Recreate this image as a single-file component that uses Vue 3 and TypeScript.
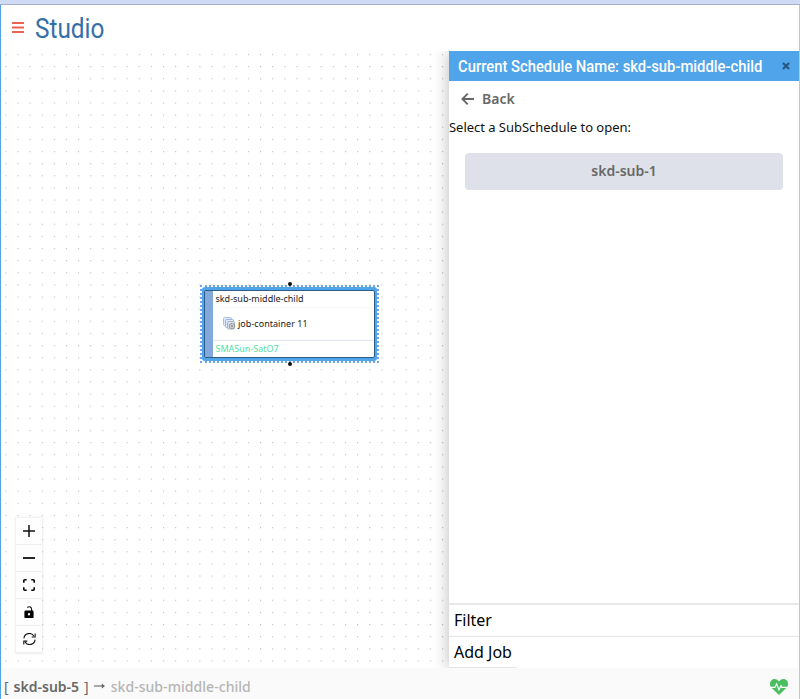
<script setup lang="ts">
import { ref } from 'vue'

const scheduleName = ref('skd-sub-middle-child')
const subSchedules = ref<string[]>(['skd-sub-1'])
const sections: string[] = ['Filter', 'Add Job']
</script>

<template>
  <div class="window">
    <header class="topbar">
      <svg class="menu" viewBox="0 0 12 11" width="12" height="11">
        <path d="M0 1h12M0 5.5h12M0 10h12" stroke="#ee6350" stroke-width="2" />
      </svg>
      <h1>Studio</h1>
    </header>

    <main class="workspace">
      <section class="canvas">
        <svg class="dots" width="448" height="617">
          <defs>
            <pattern id="grid" x="4.3" y="2.9" width="12.13" height="12.13" patternUnits="userSpaceOnUse">
              <circle cx="0.6" cy="0.6" r="0.6" fill="#b0b0b0" />
            </pattern>
          </defs>
          <rect width="448" height="617" fill="url(#grid)" />
        </svg>

        <div class="node">
          <i class="port top"></i>
          <i class="port bottom"></i>
          <div class="frame">
            <div class="card">
              <div class="stripe"></div>
              <div class="rows">
                <div class="name"><span>{{ scheduleName }}</span></div>
                <div class="job">
                  <svg width="13" height="13" viewBox="0 0 13 13">
                    <rect x=".5" y=".5" width="8" height="8" rx="1" fill="#dfe9fa" stroke="#a9c0e8" />
                    <rect x="2.5" y="2.5" width="8" height="8" rx="1" fill="#dfe9fa" stroke="#98b4e2" />
                    <rect x="4.5" y="4.5" width="7" height="7.5" rx="1" fill="#dce2ea" stroke="#a4b3c9" />
                    <circle cx="9" cy="9" r="2.6" fill="#d5d5d5" stroke="#959595" stroke-width="1.2" stroke-dasharray="1.5 .6" />
                    <circle cx="9" cy="9" r=".9" fill="#888" />
                  </svg>
                  <span>job-container 11</span>
                </div>
                <div class="calendar"><span>SMASun-SatO7</span></div>
              </div>
            </div>
          </div>
        </div>

        <div class="controls">
          <button aria-label="Zoom in">
            <svg viewBox="0 0 12 12" width="12" height="12"><path d="M6 0v12M0 6h12" stroke="#111" stroke-width="1.5" /></svg>
          </button>
          <button aria-label="Zoom out">
            <svg viewBox="0 0 12 12" width="12" height="12"><path d="M0 6h12" stroke="#000" stroke-width="1.7" /></svg>
          </button>
          <button aria-label="Fit view">
            <svg viewBox="0 0 12 12" width="12" height="12" fill="none" stroke="#000" stroke-width="1.6">
              <path d="M.8 3.7V1.8a1 1 0 0 1 1-1h1.9M8.3.8h1.9a1 1 0 0 1 1 1v1.9M11.2 8.3v1.9a1 1 0 0 1-1 1H8.3M3.7 11.2H1.8a1 1 0 0 1-1-1V8.3" />
            </svg>
          </button>
          <button aria-label="Toggle interactivity">
            <svg viewBox="0 0 12 13" width="12" height="13">
              <path d="M4.3 1.5C6.4-.2 8.6 1.2 8.6 3.2v2" fill="none" stroke="#111" stroke-width="1.1" />
              <path fill-rule="evenodd" d="M2.6 4.5h6.8a1.2 1.2 0 0 1 1.2 1.2v5.2a1.2 1.2 0 0 1-1.2 1.2H2.6a1.2 1.2 0 0 1-1.2-1.2V5.700a1.2 1.2 0 0 1 1.2-1.2zM6 7.1a1.2 1.2 0 1 0 0 2.4 1.2 1.2 0 0 0 0-2.4z" />
            </svg>
          </button>
          <button aria-label="Refresh">
            <svg viewBox="0 0 13 12" width="13" height="12" fill="none" stroke="#111" stroke-width="1.05">
              <path d="M.9 5.4A5.4 5.4 0 0 1 10.9 3.1M12.2.4v3.5H8.7M12.1 6.6A5.4 5.4 0 0 1 2.1 8.9M.8 11.6V8.1h3.5" />
            </svg>
          </button>
        </div>
      </section>

      <aside class="panel">
        <div class="panel-head">
          <span class="panel-title">Current Schedule Name: {{ scheduleName }}</span>
          <svg class="close" viewBox="0 0 8 8" width="8" height="8"><path d="M.9.9l6.2 6.2M7.1.9L.9 7.1" stroke="#28567e" stroke-width="2.1" /></svg>
        </div>
        <div class="back">
          <svg viewBox="0 0 13 12" width="13" height="12" fill="none" stroke="#686868" stroke-width="1.9">
            <path d="M13 6H1.4M6.7.7L1.4 6l5.3 5.3" />
          </svg>
          <span>Back</span>
        </div>
        <p class="prompt">Select a SubSchedule to open:</p>
        <button v-for="item in subSchedules" :key="item" class="sub">{{ item }}</button>
        <div class="spacer"></div>
        <div v-for="section in sections" :key="section" class="section">{{ section }}</div>
        <div class="tail"></div>
      </aside>
    </main>

    <footer class="status">
      <span class="bracket">[</span>
      <b>skd-sub-5</b>
      <span class="bracket close-bracket">]</span>
      <svg class="arrow" viewBox="0 0 11 6" width="11" height="6"><path d="M0 3h9" stroke="#666" stroke-width="1.1" /><path d="M7.8.6L11 3 7.800 5.4z" fill="#666" /></svg>
      <span class="current">{{ scheduleName }}</span>
      <svg class="health" viewBox="0 0 18 16" width="18" height="16">
        <path fill="#4bbf60" d="M9 16L1.2 8.4C-1 5.800-.1 1.700 2.500.5 5-.6 7.600.4 9 2.500 10.400.4 13-.6 15.500.5c2.600 1.200 3.500 5.300 1.300 7.900z" />
        <path fill="none" stroke="#fff" stroke-width="1.2" d="M0 8.300h4.900l1.700-3.400 2.300 5.900 2.100-4.100.9 1.600H18" />
      </svg>
    </footer>
  </div>
</template>

<style>
body {
  background: #fff;
}
</style>

<style scoped>
* {
  box-sizing: border-box;
}

.window {
  display: flex;
  flex-direction: column;
  width: 800px;
  height: 699px;
  overflow: hidden;
  background:
    linear-gradient(#a7adcb, #a7adcb) 0 4px / 100% 1px no-repeat,
    linear-gradient(#cfdbf5, #cfdbf5) 0 0 / 100% 4px no-repeat,
    linear-gradient(#50a5ea, #50a5ea) 0 5px / 1px 100% no-repeat,
    linear-gradient(#c6c6c6, #c6c6c6) 100% 5px / 1px 100% no-repeat,
    #fff;
  padding: 5px 1px 0;
  font-family: "Noto Sans", "Open Sans", sans-serif;
  color: #111;
}

.topbar {
  display: flex;
  align-items: center;
  gap: 11px;
  height: 46px;
  padding-left: 11px;
}

.menu {
  display: block;
  margin-bottom: 1px;
}

h1 {
  margin: 0;
  padding-top: 2px;
  font: 400 28px/46px Roboto, sans-serif;
  color: #356fa8;
  transform: scaleX(0.87);
  transform-origin: left;
}

.workspace {
  display: flex;
  height: 617px;
}

.canvas {
  position: relative;
  width: 448px;
}

.dots {
  display: block;
}

.node {
  position: absolute;
  left: 199px;
  top: 234px;
  width: 179px;
  height: 78px;
  border: 2px dotted #72a3e5;
}

.frame {
  width: 175px;
  height: 74px;
  padding: 3px 2px 3px 2px;
  background: #50a5ea;
  border-radius: 3px;
}

.card {
  display: flex;
  height: 68px;
  border: 1px solid #2f5c87;
  border-radius: 2px;
  background: #fff;
}

.stripe {
  width: 8px;
  background: #83a8dc;
}

.rows {
  flex: 1;
  font-size: 9px;
  line-height: 15px;
  color: #222;
}

.rows span {
  white-space: nowrap;
}

.name,
.calendar {
  height: 17px;
  padding-left: 2.5px;
}

.name {
  border-bottom: 1px solid #f8f8fb;
}

.job {
  display: flex;
  align-items: center;
  gap: 2px;
  height: 33px;
  padding-left: 10px;
  border-bottom: 1px solid #e2e6ef;
}

.job span {
  padding-bottom: 2px;
  letter-spacing: 0.03px;
}

.job svg {
  margin-bottom: 1px;
}

.calendar {
  color: #54dfa0;
}

.port {
  position: absolute;
  left: 86px;
  width: 4px;
  height: 4px;
  border-radius: 50%;
  background: #111;
}

.port.top {
  top: -5px;
}

.port.bottom {
  bottom: -5px;
}

.controls {
  position: absolute;
  left: 15px;
  top: 467px;
  width: 26px;
  box-shadow: 0 0 2px 1px rgba(0, 0, 0, 0.08);
}

.controls button {
  display: flex;
  align-items: center;
  justify-content: center;
  width: 26px;
  height: 27px;
  padding: 0;
  border: 0;
  border-bottom: 1px solid #eee;
  background: #fefefe;
}

.panel {
  display: flex;
  position: relative;
  flex-direction: column;
  width: 350px;
  background: #fff;
  box-shadow: 0 0 16px rgba(0, 0, 0, 0.28);
  clip-path: inset(0 0 0 -24px);
}

.panel-head {
  display: flex;
  align-items: center;
  justify-content: space-between;
  height: 30px;
  padding: 0 9px;
  background: #50a5ea;
}

.panel-title {
  width: 312px;
  padding-top: 2px;
  font: 500 16px/30px Roboto, sans-serif;
  color: #fff;
  white-space: nowrap;
  transform: scaleX(0.925);
  transform-origin: left;
}

.close {
  flex: none;
}

.back {
  display: flex;
  align-items: center;
  gap: 8px;
  height: 36px;
  padding-left: 12px;
  font-size: 14px;
  font-weight: 600;
  color: #686868;
}

.back span {
  padding-bottom: 2px;
}

.prompt {
  margin: 0;
  font-size: 13px;
  line-height: 20px;
  letter-spacing: -0.03px;
}

.sub {
  height: 37px;
  margin: 16px 16px 0;
  padding: 0 0 2px;
  border: 0;
  border-radius: 4px;
  background: #dee1e9;
  font: 600 14px "Noto Sans", sans-serif;
  color: #686868;
}

.spacer {
  flex: 1;
  border-bottom: 2px solid #e9e9e9;
}

.section {
  height: 32px;
  padding-left: 5px;
  border-bottom: 1px solid #e6e6e6;
  font-size: 16px;
  line-height: 30px;
  color: #000;
}

.section:nth-last-child(2) {
  height: 30px;
  border: 0;
}

.tail {
  width: 68px;
  height: 1px;
  background: #e4e4e4;
}

.status {
  display: flex;
  align-items: center;
  height: 31px;
  padding: 6px 11px 0 3px;
  background: #fafafa;
  font-size: 14px;
  color: #686868;
}

.status b {
  margin-left: 5px;
  font-weight: 600;
}

.close-bracket {
  margin-left: 5px;
}

.arrow {
  margin: 0 6px 1px 5px;
}

.current {
  color: #b5b5b5;
  font-weight: 500;
  letter-spacing: 0.05px;
}

.health {
  margin-left: auto;
}
</style>
